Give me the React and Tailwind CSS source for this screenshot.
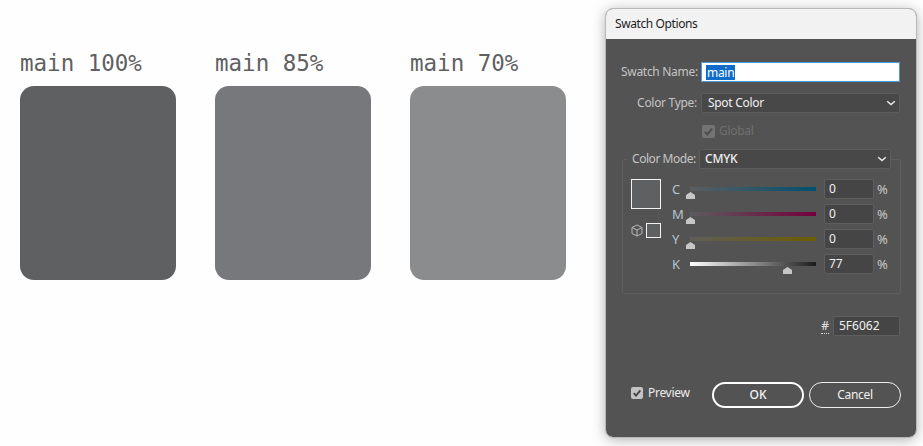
import React from "react";

const ui = "font-['Noto_Sans','Open_Sans',sans-serif]";

function Chevron() {
  return (
    <svg width="10" height="6" viewBox="0 0 10 6" className="shrink-0">
      <path d="M1.2 1.2 L5 4.6 L8.8 1.2" fill="none" stroke="#e8e8e8" strokeWidth="1.5" />
    </svg>
  );
}

function Check({ color, size = 11 }) {
  return (
    <svg width={size} height={size} viewBox="0 0 12 12">
      <path d="M2 6.2 L4.8 9.2 L10 2.8" fill="none" stroke={color} strokeWidth="2.2" />
    </svg>
  );
}

function Swatch({ label, color, text }) {
  return (
    <div className="w-[155.5px] flex flex-col">
      <div className="font-['DejaVu_Sans_Mono',monospace] text-[22.5px] leading-[26px] whitespace-nowrap" style={{ color: text }}>
        {label}
      </div>
      <div className="h-[194px] mt-[10px] rounded-[14px]" style={{ background: color }} />
    </div>
  );
}

function Slider({ letter, gradient, thumb, value }) {
  return (
    <div className="h-[20px] flex items-center mb-[5px]">
      <div className="w-[19px] text-[13px] text-[#b8c4d0] leading-none pl-[1px]">{letter}</div>
      <div className="relative w-[126px] h-[4.5px]" style={{ background: gradient }}>
        <svg width="9" height="7" viewBox="0 0 9 7" className="absolute top-[5px]" style={{ left: thumb - 4 }}>
          <path d="M4.5 0 L9 3 V7 H0 V3 Z" fill="#c6c6c6" />
        </svg>
      </div>
      <div className="ml-[8px] w-[50px] h-[20px] rounded-[2px] bg-[#454545] border border-[#5e5e5e] text-[#f0f0f0] text-[12px] leading-[18px] pl-[4px]">
        {value}
      </div>
      <div className="ml-[3px] text-[13px] text-[#c8c8c8] leading-none">%</div>
    </div>
  );
}

export default function App() {
  return (
    <div className={`relative w-[923px] h-[446px] overflow-hidden bg-[#fefefe] ${ui}`}>
      <div className="flex gap-[39.5px] pl-[20px] pt-[50px]">
        <Swatch label="main 100%" color="#5f6062" text="#5f6062" />
        <Swatch label="main 85%" color="#77787b" text="#5f6062" />
        <Swatch label="main 70%" color="#8b8c8e" text="#5f6062" />
      </div>

      <div className="absolute left-[606px] top-[9px] w-[310px] h-[428px] rounded-[7px] overflow-hidden bg-[#535353] shadow-[0_2px_14px_rgba(0,0,0,0.35)] outline outline-1 outline-[#b8b8b8]">
        <div className="h-[30px] bg-[#f2f2f2] pl-[9px] text-[12px] tracking-[-0.4px] leading-[29px] text-[#1c1c1c]">Swatch Options</div>

        <div className="pt-[23px] pl-[15px] pr-[16px]">
          {/* name */}
          <div className="flex items-center h-[20px]">
            <div className="w-[76px] text-right text-[12px] tracking-[-0.3px] whitespace-nowrap text-[#c4c4c4]">Swatch Name:</div>
            <div className="w-[199px] ml-[4px] h-[20px] bg-white border border-[#4a9ae0] pl-[4px] flex items-center text-[12px] tracking-[-0.3px] text-white">
              <span className="bg-[#0f6cc8] leading-[15px] px-[1px]">main</span>
            </div>
          </div>

          {/* type */}
          <div className="flex items-center h-[20px] mt-[11px]">
            <div className="w-[76px] text-right text-[12px] tracking-[-0.3px] whitespace-nowrap text-[#c4c4c4]">Color Type:</div>
            <div className="w-[199px] ml-[4px] h-[20px] rounded-[2px] bg-[#484848] border border-[#5c5c5c] pl-[6px] pr-[3px] flex items-center justify-between text-[12px] tracking-[-0.3px] text-[#f0f0f0]">
              <span>Spot Color</span>
              <Chevron />
            </div>
          </div>

          {/* global */}
          <div className="flex items-center h-[14px] mt-[11px] ml-[81px]">
            <div className="w-[13px] h-[13px] rounded-[2px] bg-[#747474] flex items-center justify-center">
              <Check color="#4e4e4e" />
            </div>
            <span className="ml-[4px] text-[12px] tracking-[-0.3px] text-[#6f6f6f]">Global</span>
          </div>

          {/* group */}
          <div className="mt-[21px] ml-[1px] w-[279px] h-[135px] rounded-[2px] border border-[#5e5e5e] pt-[19px] pl-[8px] relative">
            <div className="absolute -top-[11px] left-[4px] pl-[5px] flex items-center h-[20px] bg-[#535353]">
              <span className="w-[63px] text-[12px] tracking-[-0.45px] whitespace-nowrap text-[#c4c4c4]">Color Mode:</span>
              <div className="w-[192px] ml-[4px] h-[20px] rounded-[2px] bg-[#484848] border border-[#5c5c5c] pl-[5px] pr-[3px] flex items-center justify-between text-[12px] tracking-[-0.2px] font-medium text-[#f0f0f0]">
                <span>CMYK</span>
                <Chevron />
              </div>
            </div>

            <div className="flex">
              <div className="w-[30px] mr-[10px]">
                <div className="w-[30px] h-[30px] bg-[#5f6062] border border-[#f2f2f2]" />
                <div className="flex items-center mt-[14px]">
                  <svg width="12" height="13" viewBox="0 0 12 13" className="shrink-0">
                    <path d="M6 1 L11 3.5 V9.5 L6 12 L1 9.5 V3.5 Z M1 3.5 L6 6 L11 3.5 M6 6 V12" fill="none" stroke="#b8b8b8" strokeWidth="1" />
                  </svg>
                  <div className="ml-[3px] shrink-0 w-[15px] h-[15px] bg-[#5f6062] border border-[#f2f2f2]" />
                </div>
              </div>
              <div>
                <Slider letter="C" thumb={0} value="0" gradient="linear-gradient(90deg,#5c5e60,#00506f)" />
                <Slider letter="M" thumb={0} value="0" gradient="linear-gradient(90deg,#5c5c5e,#74003c)" />
                <Slider letter="Y" thumb={0} value="0" gradient="linear-gradient(90deg,#5e5e58,#6e5c00)" />
                <Slider letter="K" thumb={97} value="77" gradient="linear-gradient(90deg,#ffffff,#1c1c1c)" />
              </div>
            </div>
          </div>

          {/* hex */}
          <div className="flex items-center justify-end h-[20px] mt-[22px]">
            <span className="text-[12px] leading-[14px] text-[#dcdcdc] border-b border-dotted border-[#dcdcdc] font-medium">#</span>
            <div className="ml-[4px] w-[67px] h-[20px] rounded-[2px] bg-[#454545] border border-[#5e5e5e] pl-[5px] text-[12px] leading-[18px] text-[#f0f0f0]">5F6062</div>
          </div>

          {/* footer */}
          <div className="flex items-center justify-between mt-[46px] h-[26px] -mr-[1px]">
            <div className="flex items-center -mt-[5px] ml-[10px]">
              <div className="w-[12px] h-[12px] rounded-[2px] bg-[#c4c4c4] flex items-center justify-center">
                <Check color="#444444" size={10} />
              </div>
              <span className="ml-[5px] text-[12px] tracking-[-0.3px] text-[#ececec]">Preview</span>
            </div>
            <div className="flex gap-[5px]">
              <div className="w-[92px] h-[26px] rounded-full border-2 border-white flex items-center justify-center text-[12px] font-medium text-[#f4f4f4]">OK</div>
              <div className="w-[92px] h-[26px] rounded-full border border-[#eeeeee] flex items-center justify-center text-[12px] tracking-[-0.3px] text-[#f0f0f0]">Cancel</div>
            </div>
          </div>
        </div>
      </div>
    </div>
  );
}
